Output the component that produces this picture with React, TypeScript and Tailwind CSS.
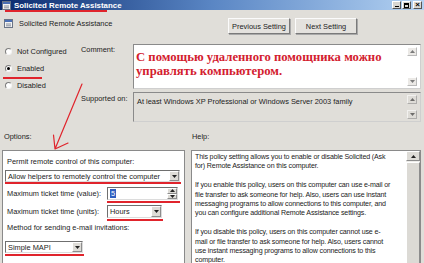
import type { ReactNode } from "react";

function Radio({ checked, label }: { checked?: boolean; label: string }) {
  return (
    <div className="flex h-[17px] items-center gap-[5px]">
      <span className="flex h-[7px] w-[7px] items-center justify-center rounded-full border border-t-[#7c7c7c] border-l-[#7c7c7c] border-b-[#f4f4f4] border-r-[#f4f4f4] bg-white">
        {checked && <span className="h-[3px] w-[3px] rounded-full bg-black" />}
      </span>
      <span>{label}</span>
    </div>
  );
}

function ArrowBtn({ dir, className = "" }: { dir: "up" | "down"; className?: string }) {
  return (
    <div
      className={`flex items-center justify-center border border-t-white border-l-white border-b-[#8d8d8d] border-r-[#8d8d8d] bg-[#dedcd7] ${className}`}
    >
      <svg width="5" height="3" viewBox="0 0 5 3">
        {dir === "up" ? (
          <path d="M0 3 L2.5 0 L5 3 Z" fill="#222" />
        ) : (
          <path d="M0 0 L2.5 3 L5 0 Z" fill="#222" />
        )}
      </svg>
    </div>
  );
}

function Button({ children }: { children: ReactNode }) {
  return (
    <div className="flex h-[16px] w-[62px] items-center justify-center border border-t-[#fbfbfb] border-l-[#fbfbfb] border-b-[#7a7a7a] border-r-[#7a7a7a] bg-[#e4e2de] shadow-[1px_1px_0_#a9a9a9]">
      {children}
    </div>
  );
}

function Field({
  children,
  className = "",
  spin,
}: {
  children: ReactNode;
  className?: string;
  spin?: boolean;
}) {
  return (
    <div
      className={`flex items-stretch border border-t-[#6f6f6f] border-l-[#6f6f6f] border-b-[#dcdcdc] border-r-[#dcdcdc] bg-white ${className}`}
    >
      <div className="flex flex-1 items-center overflow-hidden whitespace-nowrap pl-[2px]">
        {children}
      </div>
      {spin ? (
        <div className="flex w-[10px] flex-col">
          <ArrowBtn dir="up" className="flex-1" />
          <ArrowBtn dir="down" className="flex-1" />
        </div>
      ) : (
        <ArrowBtn dir="down" className="w-[10px]" />
      )}
    </div>
  );
}

function PolicyIcon() {
  return (
    <svg width="9" height="9" viewBox="0 0 9 9">
      <rect x="0.5" y="0.5" width="8" height="8" fill="#f2f2f2" stroke="#6a7486" />
      <rect x="1" y="1" width="7" height="2" fill="#4a6fb5" />
      <path d="M2 5 H7 M2 6.8 H7" stroke="#6a7486" strokeWidth="0.8" />
    </svg>
  );
}

function BoxScroll() {
  return (
    <div className="flex w-[14px] flex-col justify-between py-[2px] pr-[3px] pl-[1px]">
      <ArrowBtn dir="up" className="h-[9px] opacity-60" />
      <ArrowBtn dir="down" className="h-[9px] opacity-60" />
    </div>
  );
}

const help = [
  [
    "This policy setting allows you to enable or disable Solicited (Ask",
    "for) Remote Assistance on this computer.",
  ],
  [
    "If you enable this policy, users on this computer can use e-mail or",
    "file transfer to ask someone for help. Also, users can use instant",
    "messaging programs to allow connections to this computer, and",
    "you can configure additional Remote Assistance settings.",
  ],
  [
    "If you disable this policy, users on this computer cannot use e-",
    "mail or file transfer to ask someone for help. Also, users cannot",
    "use instant messaging programs to allow connections to this",
    "computer.",
  ],
];

export default function App() {
  return (
    <div className="relative h-[263px] w-[424px] overflow-hidden bg-[#e0ded9] font-['Liberation_Sans',Arial,sans-serif] text-[7.4px] leading-[9px] text-[#1b1b1b]">
      {/* Title bar */}
      <div className="flex h-[10px] items-center bg-gradient-to-r from-[#0b2a6e] via-[#5a86c4] to-[#b4d2f2] pl-[2px] pr-[2px]">
        <PolicyIcon />
        <span className="ml-[3px] text-[7.9px] font-bold text-white">Solicited Remote Assistance</span>
        <div className="ml-auto flex gap-[1px]">
          <div className="flex h-[8px] w-[9px] items-end justify-center border border-t-white border-l-white border-b-[#555] border-r-[#555] bg-[#d8d6d1] pb-[1px]">
            <div className="h-[1px] w-[4px] bg-black" />
          </div>
          <div className="flex h-[8px] w-[9px] items-center justify-center border border-t-white border-l-white border-b-[#555] border-r-[#555] bg-[#d8d6d1]">
            <div className="h-[5px] w-[5px] border border-t-2 border-black" />
          </div>
          <div className="ml-[1px] flex h-[8px] w-[9px] items-center justify-center border border-t-white border-l-white border-b-[#555] border-r-[#555] bg-[#d8d6d1] text-[8px] font-bold leading-none text-black">
            ×
          </div>
        </div>
      </div>

      {/* Header */}
      <div className="flex h-[33px]">
        <div className="flex items-start gap-[6px] pt-[9px] pl-[4px]">
          <PolicyIcon />
          <span className="leading-[9px]">Solicited Remote Assistance</span>
        </div>
        <div className="ml-auto flex gap-[5px] pt-[8px] pr-[67px]">
          <Button>Previous Setting</Button>
          <Button>Next Setting</Button>
        </div>
      </div>

      {/* Settings */}
      <div className="flex">
        <div className="w-[78px] pl-[5px]">
          <Radio label="Not Configured" />
          <Radio label="Enabled" checked />
          <Radio label="Disabled" />
        </div>
        <div className="flex flex-1 flex-col gap-[3px] pt-[1px] pr-[3px]">
          <div className="flex">
            <div className="w-[55px] pt-[1px] pl-[3px]">Comment:</div>
            <div className="flex h-[45px] flex-1 border border-t-[#8a8a8a] border-l-[#8a8a8a] border-b-[#cfcfcf] border-r-[#cfcfcf] bg-white">
              <div className="flex-1 whitespace-nowrap pt-[5px] pl-[2px] font-['Liberation_Serif','Times_New_Roman',serif] text-[12.7px] font-bold leading-[14px] text-[#d3202e]">
                С помощью удаленного помощника можно
                <br />
                управлять компьютером.
              </div>
              <BoxScroll />
            </div>
          </div>
          <div className="flex">
            <div className="w-[55px] pt-[2px] pl-[3px]">Supported on:</div>
            <div className="flex h-[30px] flex-1 border border-t-[#8a8a8a] border-l-[#8a8a8a] border-b-[#cfcfcf] border-r-[#cfcfcf] bg-[#e0ded9]">
              <div className="flex-1 pt-[4px] pl-[3px]">
                At least Windows XP Professional or Windows Server 2003 family
              </div>
              <BoxScroll />
            </div>
          </div>
        </div>
      </div>

      {/* Section labels */}
      <div className="flex h-[28px] items-center">
        <div className="w-[188px] pl-[4px]">Options:</div>
        <div className="pl-[4px]">Help:</div>
      </div>

      {/* Panels */}
      <div className="flex gap-[6px] pl-[2px]">
        <div className="flex h-[120px] w-[183px] flex-col border border-[#8a8a8a] bg-white px-[2px]">
          <div className="mt-[6px] pl-[2px]">Permit remote control of this computer:</div>
          <Field className="mt-[4px] h-[12px] w-[175px] border-[#555]">
            Allow helpers to remotely control the computer
          </Field>
          <div className="mt-[5px] flex items-center">
            <div className="w-[102px] pl-[2px]">Maximum ticket time (value):</div>
            <Field className="h-[13px] w-[71px]" spin>
              <span className="bg-[#2f5fc1] px-[1px] text-white">5</span>
            </Field>
          </div>
          <div className="mt-[5px] flex items-center">
            <div className="w-[102px] pl-[2px]">Maximum ticket time (units):</div>
            <Field className="h-[13px] w-[55px]">Hours</Field>
          </div>
          <div className="mt-[5px] pl-[2px]">Method for sending e-mail invitations:</div>
          <Field className="mt-[9px] h-[12px] w-[78px]">Simple MAPI</Field>
        </div>
        <div className="flex h-[120px] w-[230px] border border-[#8a8a8a] bg-white">
          <div className="flex flex-1 flex-col gap-[9.4px] overflow-hidden whitespace-nowrap pt-[2px] pl-[3px] text-[7.1px] leading-[9.4px] tracking-[-0.15px]">
            {help.map((para, i) => (
              <div key={i}>
                {para.map((line) => (
                  <div key={line}>{line}</div>
                ))}
              </div>
            ))}
          </div>
          <div className="flex w-[14px] flex-col bg-[#eeedea]">
            <ArrowBtn dir="up" className="h-[10px]" />
            <div className="mt-[1px] flex-1 border border-t-white border-l-white border-b-[#8d8d8d] border-r-[#8d8d8d] bg-[#dcdad5]" />
          </div>
        </div>
      </div>

      {/* Red annotations */}
      <div className="absolute top-[10px] left-[5px] h-[1.5px] w-[102px] bg-[#e0242c]" />
      <div className="absolute top-[77px] left-[3px] h-[1.5px] w-[39px] bg-[#e0242c]" />
      <div className="absolute top-[182px] left-[5px] h-[1.5px] w-[176px] bg-[#e0242c]" />
      <div className="absolute top-[201px] left-[107px] h-[1.5px] w-[73px] bg-[#e0242c]" />
      <div className="absolute top-[219px] left-[107px] h-[1.5px] w-[56px] bg-[#e0242c]" />
      <div className="absolute top-[254px] left-[5px] h-[1.5px] w-[79px] bg-[#e0242c]" />
      <svg className="pointer-events-none absolute inset-0" width="424" height="263" viewBox="0 0 424 263">
        <path d="M82 84 L55 149 M55 149 L53.5 135 M55 149 L68 143" fill="none" stroke="#e0242c" strokeWidth="1.2" strokeLinecap="round" />
      </svg>
    </div>
  );
}
